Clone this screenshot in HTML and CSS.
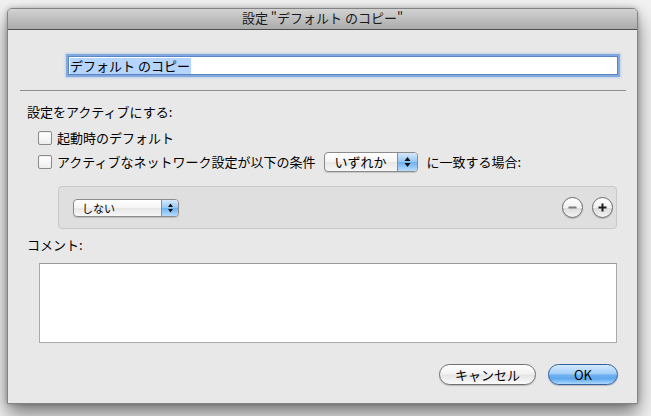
FILE: index.html
```html
<!DOCTYPE html>
<html lang="ja">
<head>
<meta charset="utf-8">
<title>設定</title>
<link rel="stylesheet" href="styles.css">
</head>
<body>
<div class="window">
  <div class="titlebar">設定 "デフォルト のコピー"</div>
  <div class="content">
    <div class="field"><span class="sel">デフォルト のコピー</span></div>
    <div class="sep"></div>
    <div class="label">設定をアクティブにする:</div>
    <div class="row row1"><span class="checkbox"></span><span>起動時のデフォルト</span></div>
    <div class="row row2">
      <span class="checkbox"></span><span>アクティブなネットワーク設定が以下の条件</span>
      <div class="popup popup-any">
        <span class="ptext">いずれか</span>
        <span class="parrow"><svg width="7" height="12" viewBox="0 0 7 12"><path d="M3.5 1 L6.5 5 L0.5 5 Z M3.5 11 L6.5 7 L0.5 7 Z" fill="#111"/></svg></span>
      </div>
      <span class="after">に一致する場合:</span>
    </div>
    <div class="rules">
      <div class="popup popup-small">
        <span class="ptext">しない</span>
        <span class="parrow"><svg width="7" height="12" viewBox="0 0 7 12"><path d="M3.5 1.5 L6 5 L1 5 Z M3.5 10.5 L6 7 L1 7 Z" fill="#111"/></svg></span>
      </div>
      <span class="spacer"></span>
      <span class="circle"><svg width="11" height="11" viewBox="0 0 11 11"><rect x="1.5" y="4.5" width="8" height="2" fill="#7b7b7b"/></svg></span>
      <span class="circle"><svg width="11" height="11" viewBox="0 0 11 11"><rect x="1.5" y="4.5" width="8" height="2" fill="#1e1e1e"/><rect x="4.5" y="1.5" width="2" height="8" fill="#1e1e1e"/></svg></span>
    </div>
    <div class="label label-comment">コメント:</div>
    <div class="comment"></div>
    <div class="buttons">
      <span class="btn cancel">キャンセル</span>
      <span class="btn ok">OK</span>
    </div>
  </div>
</div>
</body>
</html>
```
FILE: styles.css
```css
body {
  margin: 0;
  width: 651px;
  height: 416px;
  overflow: hidden;
  background: #f2f2f2;
  font-family: "Noto Sans CJK JP", "Liberation Sans", sans-serif;
  font-size: 13px;
  color: #000;
}

.window {
  margin: 8px 0 0 7px;
  width: 631px;
  height: 396px;
  box-sizing: border-box;
  border: 1px solid #838383;
  border-radius: 5px 5px 0 0;
  background: #e8e8e8;
  box-shadow: 0 10px 20px rgba(0, 0, 0, 0.5), 0 0 5px rgba(0, 0, 0, 0.25);
  display: flex;
  flex-direction: column;
}

.titlebar {
  height: 20px;
  border-bottom: 1px solid #4f4f4f;
  border-radius: 4px 4px 0 0;
  background: linear-gradient(#d2d2d2, #ababab);
  text-align: center;
  line-height: 18px;
  font-size: 13px;
  color: #1a1a1a;
}

.content {
  padding: 0 20px 0 19px;
  display: flex;
  flex-direction: column;
}

.field {
  margin: 26px -1px 0 41px;
  height: 17px;
  border: 1px solid #5b84c2;
  background: #fff;
  box-shadow: 0 0 0 2px rgba(118, 160, 222, 0.85), 0 0 2px 3px rgba(140, 180, 235, 0.4);
  display: flex;
  align-items: center;
  padding-left: 1px;
}

.sel {
  background: #b5d5ff;
  line-height: 16px;
  padding-right: 1px;
}

.sep {
  height: 1px;
  background: #8c8c8c;
  margin: 15px -9px 0 -7px;
}

.label {
  margin-top: 13px;
  line-height: 16px;
}

.row {
  display: flex;
  align-items: center;
  margin-left: 11px;
  line-height: 16px;
}

.row1 {
  margin-top: 10px;
  height: 16px;
}

.row2 {
  margin-top: 6px;
  height: 20px;
}

.checkbox {
  width: 12px;
  height: 12px;
  border: 1px solid #8a8a8a;
  border-radius: 2px;
  background: linear-gradient(#ffffff, #ededed);
  box-shadow: inset 0 1px 1px rgba(0, 0, 0, 0.08);
  margin-right: 5px;
  flex: none;
}

.popup {
  display: flex;
  box-sizing: border-box;
  border: 1px solid #8b8b8b;
  border-radius: 4px;
  overflow: hidden;
  background: linear-gradient(#ffffff 0%, #f5f5f5 48%, #e7e7e7 52%, #f7f7f7 100%);
  box-shadow: 0 1px 1px rgba(0, 0, 0, 0.15);
  flex: none;
}

.ptext {
  flex: 1;
}

.parrow {
  border-left: 1px solid #7d8fa8;
  background: linear-gradient(#d6e9fc, #98c7f5 48%, #70b1f0 52%, #b8dcfb);
  display: flex;
  align-items: center;
  justify-content: center;
}

.popup-any {
  width: 94px;
  height: 20px;
  margin-left: 8px;
}

.popup-any .ptext {
  padding-left: 10px;
  line-height: 18px;
}

.popup-any .parrow {
  width: 19px;
}

.after {
  margin-left: 9px;
}

.rules {
  margin: 14px 0 0 31px;
  height: 43px;
  box-sizing: border-box;
  border: 1px solid #c9c9c9;
  border-radius: 4px;
  background: #dfdfdf;
  display: flex;
  align-items: center;
  padding: 0 3px 0 14px;
}

.popup-small {
  width: 106px;
  height: 18px;
  font-size: 11px;
}

.popup-small .ptext {
  padding-left: 8px;
  line-height: 16px;
}

.popup-small .parrow {
  width: 16px;
}

.spacer {
  flex: 1;
}

.circle {
  width: 19px;
  height: 19px;
  margin-left: 9px;
  border: 1px solid #6c6c6c;
  border-radius: 50%;
  background: linear-gradient(#ffffff, #f1f1f1 50%, #dcdcdc 55%, #f4f4f4);
  box-shadow: 0 1px 1px rgba(0, 0, 0, 0.2);
  display: flex;
  align-items: center;
  justify-content: center;
  flex: none;
}

.label-comment {
  margin-top: 8px;
}

.comment {
  margin: 10px 0 0 12px;
  height: 80px;
  box-sizing: border-box;
  border: 1px solid #a9a9a9;
  border-top-color: #9a9a9a;
  background: #fff;
}

.buttons {
  display: flex;
  justify-content: flex-end;
  gap: 12px;
  margin: 21px -1px 0 0;
}

.btn {
  height: 21px;
  box-sizing: border-box;
  border-radius: 11px;
  border: 1px solid #707070;
  background: linear-gradient(#fefefe, #f2f2f2 48%, #e3e3e3 52%, #fbfbfb);
  box-shadow: 0 1px 1px rgba(0, 0, 0, 0.2);
  font-size: 13px;
  line-height: 19px;
  text-align: center;
}

.cancel {
  width: 97px;
}

.ok {
  width: 70px;
  border-color: #34609f;
  background: linear-gradient(#d4e9fd, #a3cff8 45%, #72b3f1 52%, #5ea7ee 72%, #acdafd);
}
```
